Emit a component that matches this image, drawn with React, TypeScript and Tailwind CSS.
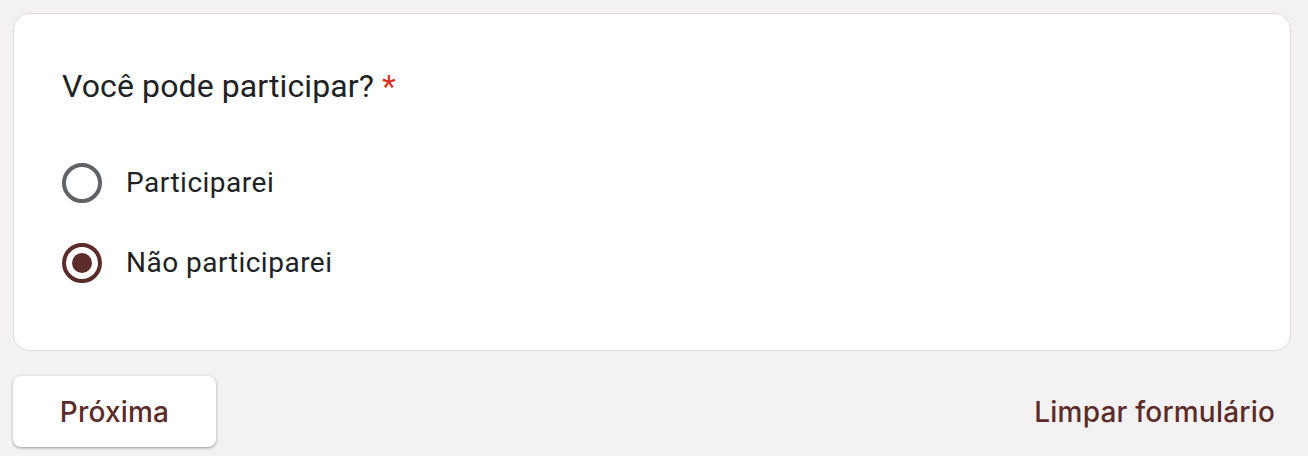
import React, { useState } from 'react';

const opcoes = ['Participarei', 'Não participarei'];

function Radio({ checked }: { checked: boolean }) {
  return (
    <span
      className={
        'flex h-10 w-10 shrink-0 items-center justify-center rounded-full border-4 ' +
        (checked ? 'border-[#5b2c2a]' : 'border-[#5f6368]')
      }
    >
      {checked && <span className="h-5 w-5 rounded-full bg-[#5b2c2a]" />}
    </span>
  );
}

function App() {
  const [resposta, setResposta] = useState<string>('Não participarei');

  return (
    <div className="min-h-[456px] w-full bg-[#f4f1f2] pl-[13px] pr-[17px] pt-[13px] font-['Roboto',sans-serif]">
      <div className="rounded-2xl border border-[#dadce0] bg-white pl-12 pr-12 pt-12 pb-[67px]">
        <h2 className="text-[32px] leading-[48px] font-normal tracking-[0.1px] text-[#202124]">
          Você pode participar? <span className="text-[#d93025]">*</span>
        </h2>

        <div className="mt-[53px] flex flex-col gap-10">
          {opcoes.map((op) => (
            <label
              key={op}
              className="flex h-10 cursor-pointer items-center gap-6"
              onClick={() => setResposta(op)}
            >
              <Radio checked={resposta === op} />
              <span className="text-[28px] leading-10 tracking-[0.5px] text-[#202124]">{op}</span>
            </label>
          ))}
        </div>
      </div>

      <div className="mt-[25px] flex items-center justify-between">
        <button
          type="button"
          className="h-[71px] w-[203px] rounded-lg bg-white font-['Inter',sans-serif] text-[28px] font-medium tracking-[0.2px] text-[#5b2c2a] shadow-[0_1px_2px_rgba(60,64,67,0.3),0_1px_3px_1px_rgba(60,64,67,0.15)]"
        >
          Próxima
        </button>
        <button
          type="button"
          className="h-[71px] px-4 font-['Inter',sans-serif] text-[28px] font-medium tracking-[0.2px] text-[#5b2c2a]"
          onClick={() => setResposta('')}
        >
          Limpar formulário
        </button>
      </div>
    </div>
  );
}

export default App;
